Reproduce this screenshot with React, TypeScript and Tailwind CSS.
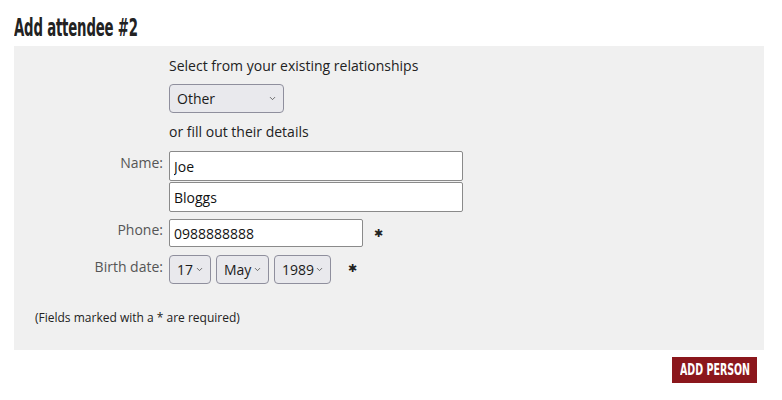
import { ChevronDown } from "lucide-react";

function Select({ value, options, width }: { value: string; options: string[]; width: string }) {
    return (
        <div className={`relative h-[29px] ${width}`}>
            <select
                defaultValue={value}
                className="h-full w-full appearance-none rounded-[4px] border border-[#8f8f9d] bg-[#e9e9ed] pl-[7px] text-[14px] text-[#1b1b1b] outline-none"
            >
                {options.map((o) => (
                    <option key={o}>{o}</option>
                ))}
            </select>
            <ChevronDown className="pointer-events-none absolute right-[7px] top-[10px] h-[9px] w-[9px] text-[#444]" strokeWidth={2} />
        </div>
    );
}

export default function App() {
    return (
        <div className="min-h-[400px] bg-white px-[14px] pt-[14px] text-[#333] [font-family:'Open_Sans',sans-serif]">
            <h2 className="h-[28px] leading-[28px]">
                <span className="inline-block origin-left scale-x-[0.59] whitespace-nowrap text-[25px] font-bold tracking-[-0.3px] text-[#222] [font-family:'DejaVu_Sans_Condensed','DejaVu_Sans',sans-serif]">
                    Add attendee #2
                </span>
            </h2>

            <div className="mt-[4px] h-[304px] w-[750px] bg-[#f0f0f0] pt-[10px]">
                <div className="grid grid-cols-[149px_1fr] gap-x-[6px] text-[14px]">
                    <div />
                    <div className="leading-[20px] text-[#222]">Select from your existing relationships</div>

                    <div />
                    <div className="mt-[8px]">
                        <Select value="Other" options={["Other", "Spouse", "Child"]} width="w-[115px]" />
                    </div>

                    <div />
                    <div className="mt-[9px] leading-[20px] text-[#222]">or fill out their details</div>

                    <div className="mt-[9px] pt-[2px] text-right leading-[20px] text-[#555]">Name:</div>
                    <div className="mt-[9px] flex flex-col gap-[1px]">
                        <input defaultValue="Joe" className="h-[30px] w-[294px] rounded-[2px] border border-[#8a8a8a] bg-white px-[4px] text-[14px] text-[#111] outline-none" />
                        <input defaultValue="Bloggs" className="h-[30px] w-[294px] rounded-[2px] border border-[#8a8a8a] bg-white px-[4px] text-[14px] text-[#111] outline-none" />
                    </div>

                    <div className="mt-[7px] pt-[1px] text-right leading-[20px] text-[#555]">Phone:</div>
                    <div className="mt-[7px] flex items-center">
                        <input defaultValue="0988888888" className="h-[28px] w-[194px] rounded-[2px] border border-[#8a8a8a] bg-white px-[4px] text-[14px] text-[#111] outline-none" />
                        <span className="ml-[11px] mt-[1px] text-[11px] text-[#222]">✱</span>
                    </div>

                    <div className="mt-[8px] pt-[2px] text-right leading-[20px] text-[#555]">Birth date:</div>
                    <div className="mt-[8px] flex items-center gap-[5px]">
                        <Select value="17" options={["17"]} width="w-[42px]" />
                        <Select value="May" options={["May"]} width="w-[53px]" />
                        <Select value="1989" options={["1989"]} width="w-[57px]" />
                        <span className="ml-[12px] mt-[-3px] text-[11px] text-[#222]">✱</span>
                    </div>
                </div>

                <p className="mt-[25px] pl-[21px] text-[12px] leading-[18px] text-[#222]">(Fields marked with a * are required)</p>
            </div>

            <div className="flex w-[750px] justify-end pr-[7px] pt-[7px]">
                <button className="flex h-[26px] w-[85px] items-center overflow-hidden bg-[#8b171c] pl-[8px]">
                    <span className="inline-block origin-left scale-x-[0.66] whitespace-nowrap text-[16px] font-bold text-white [font-family:'DejaVu_Sans_Condensed','DejaVu_Sans',sans-serif]">
                        ADD PERSON
                    </span>
                </button>
            </div>
        </div>
    );
}
